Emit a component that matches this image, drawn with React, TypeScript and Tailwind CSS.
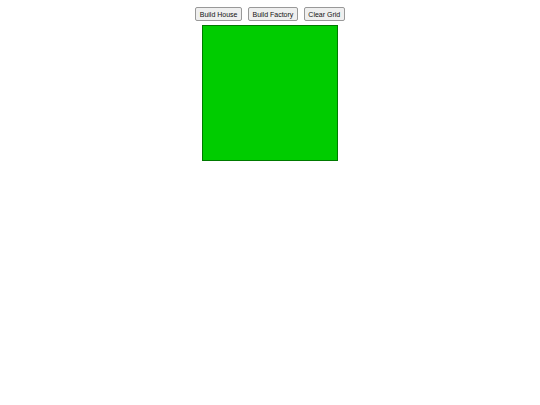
export default function App() {
  const buttons = ["Build House", "Build Factory", "Clear Grid"];

  return (
    <div className="w-[540px] h-[405px] bg-white flex flex-col items-center pt-[7px] font-['Liberation_Sans',Arial,sans-serif]">
      <div className="flex gap-[6px]">
        {buttons.map((label) => (
          <button
            key={label}
            className="h-[14px] px-[3.5px] text-[7px] font-normal leading-none text-[#111] bg-[#efefef] border border-[#999] rounded-[2px] flex items-center"
          >
            {label}
          </button>
        ))}
      </div>
      <div className="mt-[4px] w-[136px] h-[136px] bg-[#00cc00] border border-[#007a00]" />
    </div>
  );
}
